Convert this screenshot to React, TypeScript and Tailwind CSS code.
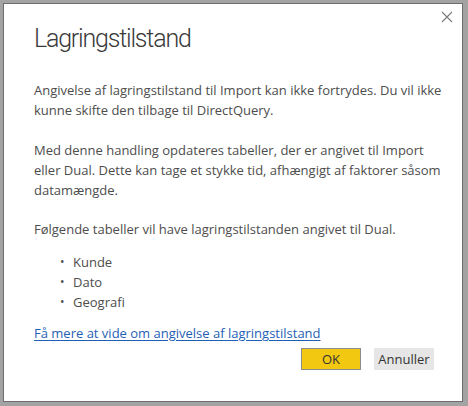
export default function App() {
  const font = { fontFamily: '"Open Sans", "Noto Sans", sans-serif' };
  return (
    <div className="w-[468px] h-[406px] bg-[#a3a3a3] pt-[3px] pl-[3px]" style={font}>
      <div className="relative w-[460px] h-[399px] bg-white border border-[#6d6d6d] flex flex-col pl-[30px] pr-[28px]">
        <button className="absolute right-[9px] top-[7px] w-[12px] h-[12px] flex items-center justify-center">
          <svg width="12" height="12" viewBox="0 0 12 12">
            <path d="M1 1 L11 11 M11 1 L1 11" stroke="#7a7a7a" strokeWidth="1.1" fill="none" />
          </svg>
        </button>
        <h1 className="mt-[17px] text-[25px] leading-[36px] font-light tracking-[-1.2px] text-[#3a3a3a] font-['Roboto',sans-serif]">Lagringstilstand</h1>
        <div className="mt-[23px] text-[13px] leading-[20px] text-[#4d4d4d] whitespace-nowrap">
          <p>Angivelse af lagringstilstand til Import kan ikke fortrydes. Du vil ikke<br />kunne skifte den tilbage til DirectQuery.</p>
          <p className="mt-[20px]">Med denne handling opdateres tabeller, der er angivet til Import<br />eller Dual. Dette kan tage et stykke tid, afhængigt af faktorer såsom<br />datamængde.</p>
          <p className="mt-[19px]">Følgende tabeller vil have lagringstilstanden angivet til Dual.</p>
          <ul className="mt-[13px] pl-[26px]">
            <li className="flex items-center"><span className="w-[13px] text-[12px]">•</span>Kunde</li>
            <li className="flex items-center"><span className="w-[13px] text-[12px]">•</span>Dato</li>
            <li className="flex items-center"><span className="w-[13px] text-[12px]">•</span>Geografi</li>
          </ul>
          <a href="#" className="mt-[11px] block text-[#1f5fb5] underline underline-offset-2">Få mere at vide om angivelse af lagringstilstand</a>
        </div>
        <div className="mt-[5px] flex justify-end gap-[13px]">
          <button className="w-[60px] h-[22px] bg-[#f2c811] border border-[#8c8c8c] text-[13px] text-[#333] leading-none">OK</button>
          <button className="w-[60px] h-[22px] bg-[#e6e6e6] text-[13px] text-[#333] leading-none">Annuller</button>
        </div>
      </div>
    </div>
  );
}
